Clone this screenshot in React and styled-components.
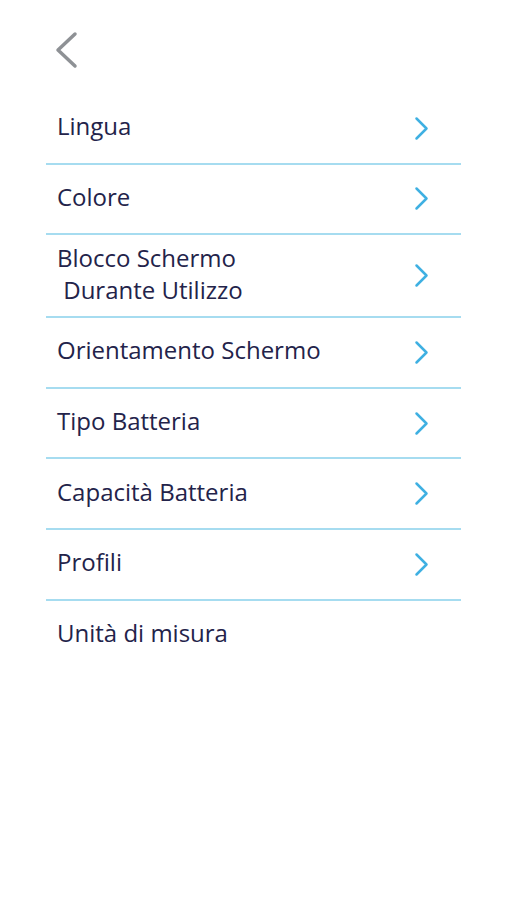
import styled, { createGlobalStyle } from 'styled-components';

const GlobalStyle = createGlobalStyle`
  html, body {
    margin: 0;
    padding: 0;
    background: #ffffff;
  }
  body {
    font-family: 'Open Sans', 'Noto Sans', sans-serif;
  }
`;

const items = [
  { label: 'Lingua', arrow: true },
  { label: 'Colore', arrow: true },
  { label: ['Blocco Schermo', ' Durante Utilizzo'], arrow: true },
  { label: 'Orientamento Schermo', arrow: true },
  { label: 'Tipo Batteria', arrow: true },
  { label: 'Capacità Batteria', arrow: true },
  { label: 'Profili', arrow: true },
  { label: 'Unità di misura', arrow: false, last: true },
];

function Chevron({ color, width, height, stroke }) {
  return (
    <svg width={width} height={height} viewBox={`0 0 ${width} ${height}`} fill="none">
      <polyline
        points={`${stroke},${stroke} ${width - stroke},${height / 2} ${stroke},${height - stroke}`}
        stroke={color}
        strokeWidth={stroke}
        strokeLinecap="round"
        strokeLinejoin="round"
      />
    </svg>
  );
}

function BackIcon() {
  return (
    <svg width="24" height="38" viewBox="0 0 24 38" fill="none">
      <polyline
        points="20,3 3,19 20,35"
        stroke="#8e9195"
        strokeWidth="3.5"
        strokeLinecap="round"
        strokeLinejoin="round"
      />
    </svg>
  );
}

export default function App() {
  return (
    <>
      <GlobalStyle />
      <Page>
        <Header>
          <BackButton>
            <BackIcon />
          </BackButton>
        </Header>
        <List>
          {items.map((item, i) => (
            <Row key={i} $tall={Array.isArray(item.label)} $last={item.last}>
              <Label>
                {Array.isArray(item.label)
                  ? item.label.map((l, j) => <Line key={j}>{l}</Line>)
                  : item.label}
              </Label>
              {item.arrow && (
                <Arrow>
                  <Chevron color="#3fb0e2" width={15} height={25} stroke={2.5} />
                </Arrow>
              )}
            </Row>
          ))}
        </List>
      </Page>
    </>
  );
}

const Page = styled.div`
  width: 507px;
  height: 900px;
  background: #ffffff;
  display: flex;
  flex-direction: column;
`;

const Header = styled.div`
  height: 94px;
  display: flex;
  align-items: flex-start;
  padding: 31px 0 0 55px;
  box-sizing: border-box;
`;

const BackButton = styled.div`
  display: flex;
  cursor: pointer;
`;

const List = styled.div`
  margin: 0 46px;
  display: flex;
  flex-direction: column;
`;

const Row = styled.div`
  height: ${({ $tall }) => ($tall ? '81px' : '68.6px')};
  display: flex;
  align-items: center;
  justify-content: space-between;
  padding: 0 32px 0 11px;
  border-bottom: ${({ $last }) => ($last ? 'none' : '2px solid #a6dcf0')};
`;

const Label = styled.div`
  font-size: 24px;
  color: #23234a;
  line-height: 32px;
  margin-top: -4px;
`;

const Line = styled.div`
  white-space: pre;
`;

const Arrow = styled.div`
  display: flex;
`;
